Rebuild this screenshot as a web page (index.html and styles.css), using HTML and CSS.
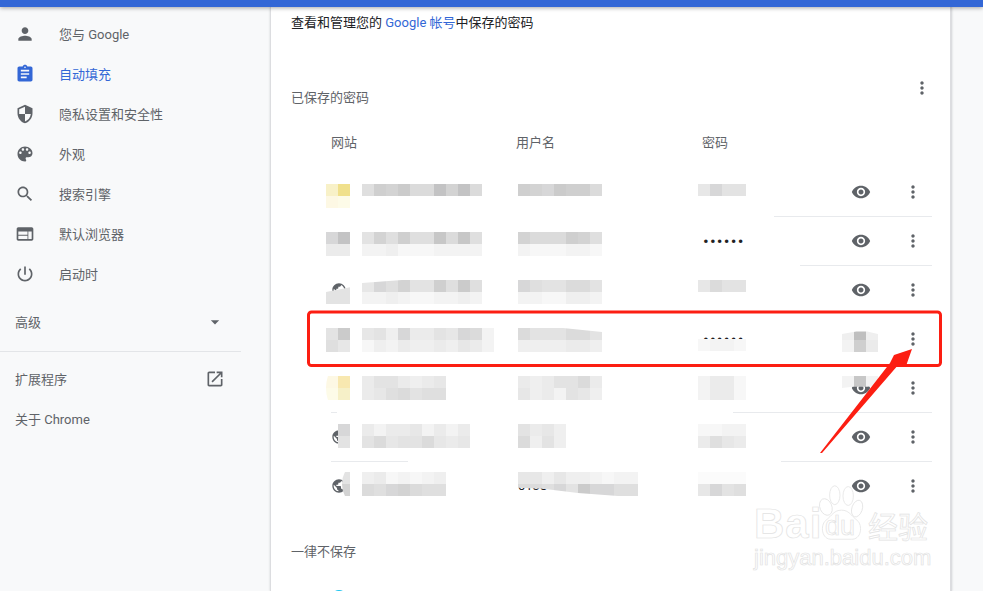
FILE: index.html
```html
<!DOCTYPE html>
<html lang="zh-CN">
<head>
<meta charset="utf-8">
<title>设置 - 自动填充</title>
<link rel="stylesheet" href="styles.css">
</head>
<body>
<header class="topbar"></header>
<div class="page">
  <nav class="sidebar">
    <a class="nav-item"><svg class="icon" viewBox="0 0 24 24"><path d="M12 12c2.21 0 4-1.79 4-4s-1.79-4-4-4-4 1.79-4 4 1.79 4 4 4zm0 2c-2.67 0-8 1.34-8 4v2h16v-2c0-2.66-5.33-4-8-4z"/></svg><span>您与 Google</span></a>
    <a class="nav-item active"><svg class="icon" viewBox="0 0 24 24"><path d="M19 3h-4.18C14.4 1.84 13.3 1 12 1c-1.3 0-2.4.84-2.82 2H5c-1.1 0-2 .9-2 2v14c0 1.1.9 2 2 2h14c1.1 0 2-.9 2-2V5c0-1.1-.9-2-2-2zm-7 0c.55 0 1 .45 1 1s-.45 1-1 1-1-.45-1-1 .45-1 1-1zm2 14H7v-2h7v2zm3-4H7v-2h10v2zm0-4H7V7h10v2z"/></svg><span>自动填充</span></a>
    <a class="nav-item"><svg class="icon" viewBox="0 0 24 24"><path d="M12 1L3 5v6c0 5.55 3.84 10.74 9 12 5.16-1.26 9-6.45 9-12V5l-9-4zm0 10.99h7c-.53 4.12-3.28 7.79-7 8.94V12H5V6.3l7-3.11v8.8z"/></svg><span>隐私设置和安全性</span></a>
    <a class="nav-item"><svg class="icon" viewBox="0 0 24 24"><path d="M12 3c-4.97 0-9 4.03-9 9s4.03 9 9 9c.83 0 1.5-.67 1.5-1.5 0-.39-.15-.74-.39-1.01-.23-.26-.38-.61-.38-.99 0-.83.67-1.5 1.5-1.5H16c2.76 0 5-2.24 5-5 0-4.42-4.03-8-9-8zm-5.5 9c-.83 0-1.5-.67-1.5-1.5S5.67 9 6.5 9 8 9.67 8 10.5 7.33 12 6.5 12zm3-4C8.67 8 8 7.33 8 6.5S8.67 5 9.5 5s1.5.67 1.5 1.5S10.33 8 9.5 8zm5 0c-.83 0-1.5-.67-1.5-1.5S13.67 5 14.5 5s1.5.67 1.5 1.5S15.33 8 14.5 8zm3 4c-.83 0-1.5-.67-1.5-1.5S16.67 9 17.5 9s1.5.67 1.5 1.5-.67 1.5-1.5 1.5z"/></svg><span>外观</span></a>
    <a class="nav-item"><svg class="icon" viewBox="0 0 24 24"><path d="M15.5 14h-.79l-.28-.27C15.41 12.59 16 11.11 16 9.5 16 5.91 13.09 3 9.5 3S3 5.91 3 9.5 5.91 16 9.5 16c1.61 0 3.09-.59 4.23-1.57l.27.28v.79l5 4.99L20.49 19l-4.99-5zm-6 0C7.01 14 5 11.99 5 9.5S7.01 5 9.5 5 14 7.01 14 9.5 11.99 14 9.5 14z"/></svg><span>搜索引擎</span></a>
    <a class="nav-item"><svg class="icon" viewBox="0 0 24 24"><path d="M20 4H4c-1.1 0-1.99.9-1.99 2L2 18c0 1.1.9 2 2 2h16c1.1 0 2-.9 2-2V6c0-1.1-.9-2-2-2zm-5 14H4v-4h11v4zm0-5H4V9h11v4zm5 5h-4V9h4v9z"/></svg><span>默认浏览器</span></a>
    <a class="nav-item"><svg class="icon" viewBox="0 0 24 24"><path d="M13 3h-2v10h2V3zm4.83 2.17l-1.42 1.42C17.99 7.86 19 9.81 19 12c0 3.87-3.13 7-7 7s-7-3.13-7-7c0-2.19 1.01-4.14 2.58-5.42L6.17 5.17C4.23 6.82 3 9.26 3 12c0 4.97 4.03 9 9 9s9-4.03 9-9c0-2.74-1.23-5.18-3.17-6.83z"/></svg><span>启动时</span></a>
    <a class="nav-plain advanced"><span>高级</span><svg class="icon" viewBox="0 0 24 24"><path d="M7 10l5 5 5-5z"/></svg></a>
    <div class="nav-rule"></div>
    <a class="nav-plain"><span>扩展程序</span><svg class="icon" viewBox="0 0 24 24"><path d="M19 19H5V5h7V3H5c-1.11 0-2 .9-2 2v14c0 1.1.89 2 2 2h14c1.1 0 2-.9 2-2v-7h-2v7zM14 3v2h3.59l-9.83 9.83 1.41 1.41L19 6.41V10h2V3h-7z"/></svg></a>
    <a class="nav-plain"><span>关于 Chrome</span></a>
  </nav>

  <main class="card">
    <p class="desc">查看和管理您的 <a class="link">Google 帐号</a>中保存的密码</p>
    <div class="section-head">
      <h2 class="section-title">已保存的密码</h2>
      <svg class="icon kebab" viewBox="0 0 24 24"><path d="M12 8c1.1 0 2-.9 2-2s-.9-2-2-2-2 .9-2 2 .9 2 2 2zm0 2c-1.1 0-2 .9-2 2s.9 2 2 2 2-.9 2-2-.9-2-2-2zm0 6c-1.1 0-2 .9-2 2s.9 2 2 2 2-.9 2-2-.9-2-2-2z"/></svg>
    </div>
    <div class="table">
      <div class="thead"><span>网站</span><span>用户名</span><span>密码</span></div>

      <div class="row"><span></span><span></span><span class="dots">••••••</span><svg class="icon" viewBox="0 0 24 24"><use href="#eye"/></svg><svg class="icon" viewBox="0 0 24 24"><use href="#more"/></svg></div>
      <div class="rule rule-1"></div>
      <div class="row"><span></span><span></span><span class="dots">••••••</span><svg class="icon" viewBox="0 0 24 24"><use href="#eye"/></svg><svg class="icon" viewBox="0 0 24 24"><use href="#more"/></svg></div>
      <div class="rule rule-2"></div>
      <div class="row"><svg class="globe" viewBox="0 0 24 24"><use href="#globe"/></svg><span></span><span class="dots">••••••</span><svg class="icon" viewBox="0 0 24 24"><use href="#eye"/></svg><svg class="icon" viewBox="0 0 24 24"><use href="#more"/></svg></div>
      <div class="rule rule-none"></div>
      <div class="row"><span></span><span></span><span class="dots">••••••</span><svg class="icon" viewBox="0 0 24 24"><use href="#eye"/></svg><svg class="icon" viewBox="0 0 24 24"><use href="#more"/></svg></div>
      <div class="rule rule-none"></div>
      <div class="row"><span></span><span></span><span class="dots">••••••</span><svg class="icon" viewBox="0 0 24 24"><use href="#eye"/></svg><svg class="icon" viewBox="0 0 24 24"><use href="#more"/></svg></div>
      <div class="rule rule-5"></div>
      <div class="row"><svg class="globe" viewBox="0 0 24 24"><use href="#globe"/></svg><span></span><span class="dots">••••••</span><svg class="icon" viewBox="0 0 24 24"><use href="#eye"/></svg><svg class="icon" viewBox="0 0 24 24"><use href="#more"/></svg></div>
      <div class="rule rule-6"></div>
      <div class="row"><svg class="globe" viewBox="0 0 24 24"><use href="#globe"/></svg><span class="user">0138</span><span class="dots">••••••</span><svg class="icon" viewBox="0 0 24 24"><use href="#eye"/></svg><svg class="icon" viewBox="0 0 24 24"><use href="#more"/></svg></div>
    </div>
    <h2 class="section-title never">一律不保存</h2>
    <div class="never-fav"></div>
  </main>
  <aside class="gutter"></aside>
</div>

<svg class="defs" aria-hidden="true">
  <defs>
    <path id="eye" d="M12 4.5C7 4.5 2.73 7.61 1 12c1.73 4.39 6 7.5 11 7.5s9.27-3.11 11-7.5c-1.73-4.39-6-7.5-11-7.5zM12 17c-2.76 0-5-2.24-5-5s2.24-5 5-5 5 2.24 5 5-2.24 5-5 5zm0-8c-1.66 0-3 1.34-3 3s1.34 3 3 3 3-1.34 3-3-1.34-3-3-3z"/>
    <path id="more" d="M12 8c1.1 0 2-.9 2-2s-.9-2-2-2-2 .9-2 2 .9 2 2 2zm0 2c-1.1 0-2 .9-2 2s.9 2 2 2 2-.9 2-2-.9-2-2-2zm0 6c-1.1 0-2 .9-2 2s.9 2 2 2 2-.9 2-2-.9-2-2-2z"/>
    <path id="globe" d="M12 2C6.48 2 2 6.48 2 12s4.48 10 10 10 10-4.48 10-10S17.52 2 12 2zm-1 17.93c-3.95-.49-7-3.85-7-7.93 0-.62.08-1.21.21-1.79L9 15v1c0 1.1.9 2 2 2v1.93zm6.9-2.54c-.26-.81-1-1.39-1.9-1.39h-1v-3c0-.55-.45-1-1-1H8v-2h2c.55 0 1-.45 1-1V7h2c1.1 0 2-.9 2-2v-.41c2.93 1.19 5 4.06 5 7.41 0 2.08-.8 3.97-2.1 5.39z"/>
  </defs>
</svg>

<!-- mosaic painted over the saved credentials -->
<div class="mosaic">
  <div class="m-row">
    <div><div class="l"><i class="y1"></i><i class="y2"></i></div><div class="l"><i class="y3"></i><i class="y4"></i></div></div>
    <div><div class="l"><i class="ce0"></i><i class="cd0"></i><i class="cd4"></i><i class="ccc"></i><i class="cdc"></i><i class="cdc"></i><i class="cc4"></i><i class="cd4"></i><i class="cc4"></i><i class="cdc"></i></div></div>
    <div><div class="l"><i class="cd0"></i><i class="cd4"></i><i class="cd8"></i><i class="ccc"></i><i class="cd0"></i><i class="cd0"></i><i class="cdc"></i></div></div>
    <div><div class="l"><i class="ce8"></i><i class="cd8"></i><i class="ce4"></i><i class="ce4"></i></div><div class="l"><i class="cff"></i><i class="cff"></i><i class="cff"></i><i class="cff"></i></div></div>
    <div></div>
  </div>
  <div class="m-row">
    <div><div class="l"><i class="cd8"></i><i class="cc4"></i></div><div class="l"><i class="cec"></i><i class="cec"></i></div></div>
    <div><div class="l"><i class="ce4"></i><i class="cd4"></i><i class="ce0"></i><i class="cd0"></i><i class="ce0"></i><i class="ce0"></i><i class="cc8"></i><i class="cdc"></i><i class="cc8"></i><i class="ce0"></i></div><div class="l"><i class="cf4"></i><i class="cf4"></i><i class="cf0"></i><i class="cf8"></i><i class="cf8"></i><i class="cf8"></i><i class="cf4"></i><i class="cf4"></i><i class="cf4"></i><i class="cf4"></i></div></div>
    <div><div class="l"><i class="cd4"></i><i class="cdc"></i><i class="cdc"></i><i class="cdc"></i><i class="cd0"></i><i class="cd4"></i><i class="ce0"></i></div><div class="l"><i class="cf4"></i><i class="cf8"></i><i class="cf8"></i><i class="cf8"></i><i class="cf4"></i><i class="cf4"></i><i class="cf8"></i></div></div>
    <div></div>
    <div></div>
  </div>
  <div class="m-row">
    <div class="fav-3"><div class="l"><i class="ce4"></i><i class="ce4"></i></div><div class="l"><i class="ce4"></i><i class="ce4"></i></div></div>
    <div class="name-3"><div class="l"><i class="ce8"></i><i class="cd8"></i><i class="ce0"></i><i class="cd4"></i><i class="ce4"></i><i class="ce4"></i><i class="cd0"></i><i class="ce0"></i><i class="ccc"></i><i class="ce0"></i></div><div class="l"><i class="cf4"></i><i class="cf4"></i><i class="cf0"></i><i class="cf4"></i><i class="cf8"></i><i class="cf8"></i><i class="cf4"></i><i class="cf4"></i><i class="cf0"></i><i class="cf4"></i></div></div>
    <div><div class="l"><i class="cd8"></i><i class="ce0"></i><i class="ce4"></i><i class="ce4"></i><i class="cdc"></i><i class="cdc"></i><i class="ce4"></i></div><div class="l"><i class="cf4"></i><i class="cf4"></i><i class="cf8"></i><i class="cf8"></i><i class="cf0"></i><i class="cf0"></i><i class="cf4"></i></div></div>
    <div><div class="l"><i class="ce8"></i><i class="cdc"></i><i class="ce4"></i><i class="ce4"></i></div><div class="l"><i class="cff"></i><i class="cff"></i><i class="cff"></i><i class="cff"></i></div></div>
    <div></div>
  </div>
  <div class="m-row">
    <div><div class="l"><i class="ce4"></i><i class="ccc"></i></div><div class="l"><i class="ce0"></i><i class="ce8"></i></div></div>
    <div><div class="l"><i class="ce8"></i><i class="ce4"></i><i class="cf0"></i><i class="cd8"></i><i class="cec"></i><i class="cec"></i><i class="ce4"></i><i class="ce8"></i><i class="cd8"></i><i class="cdc"></i><i class="cf4"></i></div><div class="l"><i class="cf8"></i><i class="cf0"></i><i class="cf4"></i><i class="cec"></i><i class="cf0"></i><i class="cf0"></i><i class="cec"></i><i class="cf0"></i><i class="ce8"></i><i class="cec"></i><i class="cf4"></i></div></div>
    <div class="user-4"><div class="l"><i class="cdc"></i><i class="ce4"></i><i class="ce4"></i><i class="ce4"></i><i class="cdc"></i><i class="cdc"></i><i class="ce4"></i></div><div class="l"><i class="cf0"></i><i class="cf0"></i><i class="cf0"></i><i class="cf0"></i><i class="cec"></i><i class="cec"></i><i class="cf0"></i></div></div>
    <div class="pass-4"><div class="l"></div><div class="l"><i class="cf8"></i><i class="cf4"></i><i class="cf4"></i><i class="cf8"></i></div></div>
    <div class="cover-4"><div class="l"><i class="cf0"></i><i class="cc0"></i><i class="cf0"></i></div><div class="l"><i class="cf4"></i><i class="cd0"></i><i class="cec"></i></div></div>
  </div>
  <div class="m-row">
    <div class="fav-5"><div class="l"><i class="y3"></i><i class="y5"></i></div><div class="l"><i class="y4"></i><i class="y6"></i></div></div>
    <div><div class="l"><i class="cec"></i><i class="ce4"></i><i class="ce4"></i><i class="cec"></i><i class="cf0"></i><i class="cec"></i><i class="ce8"></i></div><div class="l"><i class="cec"></i><i class="ce8"></i><i class="ce0"></i><i class="cdc"></i><i class="ce4"></i><i class="ce0"></i><i class="ce0"></i></div></div>
    <div><div class="l"><i class="cec"></i><i class="cf0"></i><i class="cec"></i><i class="ce4"></i><i class="ce4"></i><i class="cdc"></i><i class="cec"></i></div><div class="l"><i class="ce8"></i><i class="cf0"></i><i class="cec"></i><i class="cf4"></i><i class="ce4"></i><i class="ce8"></i><i class="cf0"></i></div></div>
    <div><div class="l"><i class="cf4"></i><i class="cec"></i><i class="cec"></i><i class="cf8"></i></div><div class="l"><i class="cf4"></i><i class="cec"></i><i class="cec"></i><i class="cf8"></i></div></div>
    <div class="cover-5"><div class="l"><i class="cf4"></i><i class="cc8"></i><i class="cf4"></i></div></div>
  </div>
  <div class="m-row">
    <div class="fav-6"><div class="l"><i class="cd8"></i></div><div class="l"><i class="ce4"></i></div></div>
    <div><div class="l"><i class="cec"></i><i class="cf4"></i><i class="cec"></i><i class="cec"></i><i class="ce8"></i><i class="cf4"></i><i class="cec"></i><i class="cf4"></i><i class="cec"></i></div><div class="l"><i class="ce4"></i><i class="cdc"></i><i class="ce8"></i><i class="ce4"></i><i class="ce4"></i><i class="cdc"></i><i class="ce8"></i><i class="cec"></i><i class="ce8"></i></div></div>
    <div><div class="l"><i class="ce4"></i><i class="cec"></i><i class="ce8"></i><i class="cf0"></i></div><div class="l"><i class="cdc"></i><i class="cf0"></i><i class="ce4"></i><i class="cf0"></i></div></div>
    <div><div class="l"><i class="cf8"></i><i class="cf8"></i><i class="cf4"></i><i class="cf4"></i></div><div class="l"><i class="cec"></i><i class="ce0"></i><i class="ce8"></i><i class="cec"></i></div></div>
    <div></div>
  </div>
  <div class="m-row">
    <div class="fav-7"><div class="l"><i class="ce4"></i></div><div class="l"><i class="cd4"></i></div></div>
    <div><div class="l"><i class="cf0"></i><i class="cec"></i><i class="cf8"></i><i class="cf4"></i><i class="cf8"></i><i class="cf4"></i><i class="cf0"></i></div><div class="l"><i class="cdc"></i><i class="ce0"></i><i class="cd8"></i><i class="cd4"></i><i class="cdc"></i><i class="ce0"></i><i class="ce0"></i></div></div>
    <div class="user-7"><div class="l"><i class="ce8"></i><i class="ce8"></i><i class="cf0"></i><i class="ce8"></i><i class="cf0"></i><i class="cf0"></i><i class="cf4"></i><i class="cf8"></i><i class="cf4"></i><i class="cf4"></i></div><div class="l"><i class="cdc"></i><i class="cdc"></i><i class="ce0"></i><i class="cd8"></i><i class="ce4"></i><i class="ccc"></i><i class="cd8"></i><i class="cd8"></i><i class="ce0"></i><i class="ce0"></i></div></div>
    <div><div class="l"><i class="cfc"></i><i class="cfc"></i><i class="cfc"></i><i class="cfc"></i></div><div class="l"><i class="ce8"></i><i class="cd8"></i><i class="ce4"></i><i class="ce0"></i></div></div>
    <div></div>
  </div>
</div>

<!-- annotation drawn on top of the screenshot -->
<svg class="annotation" viewBox="0 0 983 591">
  <rect class="red-box" x="308.5" y="312" width="632" height="53.5" rx="3"/>
  <polygon class="red-arrow" points="820,453 890,363 894,355 912,349 906,366 899,364 822,453"/>
</svg>

<div class="watermark">
  <svg class="paw" viewBox="0 0 70 70" preserveAspectRatio="none">
    <ellipse cx="16" cy="28" rx="8" ry="11" transform="rotate(-25 16 28)"/>
    <ellipse cx="28" cy="13" rx="7" ry="12"/>
    <ellipse cx="46" cy="14" rx="7" ry="12"/>
    <ellipse cx="58" cy="30" rx="7" ry="11" transform="rotate(20 58 30)"/>
    <path d="M37 32c-10 0-13 7-21 13-8 6-6 25 8 24h26c14 1 16-18 8-24-8-6-11-13-21-13z"/>
  </svg>
  <div class="wm-line"><span class="wm-bai">Bai</span><span class="wm-du">du</span><span class="wm-cn">经验</span></div>
  <div class="wm-url">jingyan.baidu.com</div>
</div>
</body>
</html>
```

FILE: styles.css
```css
* { box-sizing: border-box; }
html, body { margin: 0; padding: 0; height: 591px; overflow: hidden; }
body {
  position: relative;
  background: #f8f9fa;
  font-family: Roboto, "Noto Sans CJK SC", sans-serif;
  font-size: 13px;
  line-height: 20px;
  color: #5f6368;
}
.topbar {
  position: relative;
  z-index: 5;
  height: 7px;
  background: #3367d6;
  box-shadow: 0 1px 4px rgba(0, 0, 0, .35);
}
.page { display: flex; height: 584px; }
.icon { width: 20px; height: 20px; fill: #5f6368; flex: none; display: block; }

.sidebar { width: 270px; flex: none; padding: 7px 29px 0 0; }
.nav-item { display: flex; align-items: center; height: 40px; padding-left: 15px; gap: 24px; }
.nav-item span, .nav-plain span { padding-top: 2px; }
.active { color: #3367d6; }
.active .icon { fill: #3367d6; }
.nav-plain { display: flex; align-items: center; justify-content: space-between; height: 40px; padding: 0 16px 0 15px; }
.advanced { margin-top: 8px; }
.nav-rule { height: 1px; background: #e3e5e8; margin: 9px 0 7px; }

.card {
  width: 682px;
  flex: none;
  background: #fff;
  border-left: 1px solid #dcdde0;
  border-right: 2px solid #dcdde0;
  padding: 6px 18px 0 20px;
  box-shadow: 0 0 2px rgba(60, 64, 67, .2);
  overflow: hidden;
}
.desc { margin: 0; color: #202124; }
.link { color: #3367d6; }
.section-head { display: flex; justify-content: space-between; margin-top: 45px; height: 30px; }
.section-title { margin: 0; font-size: 13px; font-weight: 400; color: #5f6368; }
.section-head .section-title { align-self: flex-end; }
.table { margin: 25px 0 0 40px; }
.thead { display: grid; grid-template-columns: 185px 186px 1fr; margin-bottom: 15px; }
.row { display: grid; grid-template-columns: 185px 186px 149px 52px 28px; align-items: center; height: 48px; }
.globe { width: 16px; height: 16px; fill: #5f6368; display: block; }
.dots { padding-left: 1px; color: #202124; letter-spacing: 1.2px; font-size: 17px; }
.user { padding-left: 2px; color: #202124; }
.rule { height: 1px; }
.rule-1 { margin-left: 443px; background: #e8eaed; }
.rule-2 { margin-left: 469px; background: #e8eaed; }
.rule-5 { background: linear-gradient(90deg, #e8eaed 6px, transparent 6px, transparent 402px, #e8eaed 402px); }
.rule-6 { background: linear-gradient(90deg, #e8eaed 77px, transparent 77px, transparent 450px, #e8eaed 450px); }
.never { margin-top: 32px; }
.never-fav { margin: 28px 0 0 40px; width: 16px; height: 16px; border-radius: 50%; background: #1cc4f0; }
.gutter { flex: 1; }

.defs { position: absolute; width: 0; height: 0; }

/* mosaic overlay */
.mosaic {
  position: absolute;
  left: 326px;
  top: 184px;
  display: grid;
  grid-auto-rows: 24px;
  row-gap: 24px;
}
.m-row { display: grid; grid-template-columns: 36px 156px 180px 144px 36px; }
.l { display: flex; height: 12px; }
.l i { display: block; width: 12px; height: 12px; flex: none; }
.cff { background: #fff; } .cfc { background: #fbfbfb; } .cf8 { background: #f7f7f7; } .cf4 { background: #f3f3f3; }
.cf0 { background: #efefef; } .cec { background: #ebebeb; } .ce8 { background: #e7e7e7; } .ce4 { background: #e3e3e3; }
.ce0 { background: #dfdfdf; } .cdc { background: #dbdbdb; } .cd8 { background: #d7d7d8; } .cd4 { background: #d3d3d3; }
.cd0 { background: #cfcfcf; } .ccc { background: #cbcbcb; } .cc8 { background: #c7c7c7; } .cc4 { background: #c3c3c4; } .cc0 { background: #bfbfbf; }
.y1 { background: #f8f1c8; } .y2 { background: #f0e08c; } .y3 { background: #fdf8e4; } .y4 { background: #fdfbe8; } .y5 { background: #f8e8b0; } .y6 { background: #f6f0c8; }

.fav-3 { clip-path: polygon(0 50%, 100% 30%, 100% 100%, 0 100%); width: 24px; }
.name-3 { clip-path: polygon(0 12%, 40px 0, 100% 0, 100% 100%, 0 100%); width: 120px; }
.user-4 { clip-path: polygon(0 0, 45px 0, 84px 17%, 84px 100%, 0 100%); width: 84px; }
.pass-4 { width: 48px; }
.pass-4 .l:first-child { height: 11px; background: none; }
.pass-4 .l:last-child { height: 13px; background: #fff; }
.cover-4 { clip-path: polygon(0 25%, 40% 15%, 70% 15%, 100% 25%, 100% 100%, 0 100%); }
.cover-5 { clip-path: polygon(0 0, 100% 0, 100% 40%, 70% 45%, 30% 45%, 0 50%); }
.fav-5 { clip-path: ellipse(24px 30px at 24px 12px); width: 24px; }
.fav-6 { padding-left: 12px; clip-path: ellipse(18px 22px at 24px 10px); }
.fav-7 { padding-left: 12px; clip-path: ellipse(9px 16px at 25px 12px); }
.user-7 { clip-path: polygon(0 0, 100% 0, 100% 100%, 100px 100%, 60px 88%, 25px 70%, 0 66%); width: 120px; }

/* annotation */
.annotation { position: absolute; left: 0; top: 0; width: 983px; height: 591px; }
.red-box { fill: none; stroke: #fc1e12; stroke-width: 3; }
.red-arrow { fill: #fc1e12; }

/* watermark */
.watermark {
  position: absolute;
  left: 754px;
  top: 484px;
  width: 180px;
  height: 90px;
  color: #fff;
  font-family: "Liberation Sans", sans-serif;
  -webkit-text-stroke: .7px #e2e2e2;
}
.paw { position: absolute; left: 60px; top: 1px; width: 52px; height: 55px; fill: #fff; stroke: #e2e2e2; stroke-width: 1; }
.wm-line { position: absolute; left: 0; top: 22px; display: flex; align-items: baseline; white-space: nowrap; }
.wm-bai { font-size: 42px; line-height: 36px; font-weight: 700; letter-spacing: 1px; width: 71px; }
.wm-du { font-size: 27px; line-height: 36px; width: 43px; transform: translateY(-3px); }
.wm-cn { font-family: "Noto Sans CJK SC", sans-serif; font-size: 30px; line-height: 36px; }
.wm-url { position: absolute; left: 0; top: 62px; font-size: 22px; line-height: 24px; white-space: nowrap; }
```
